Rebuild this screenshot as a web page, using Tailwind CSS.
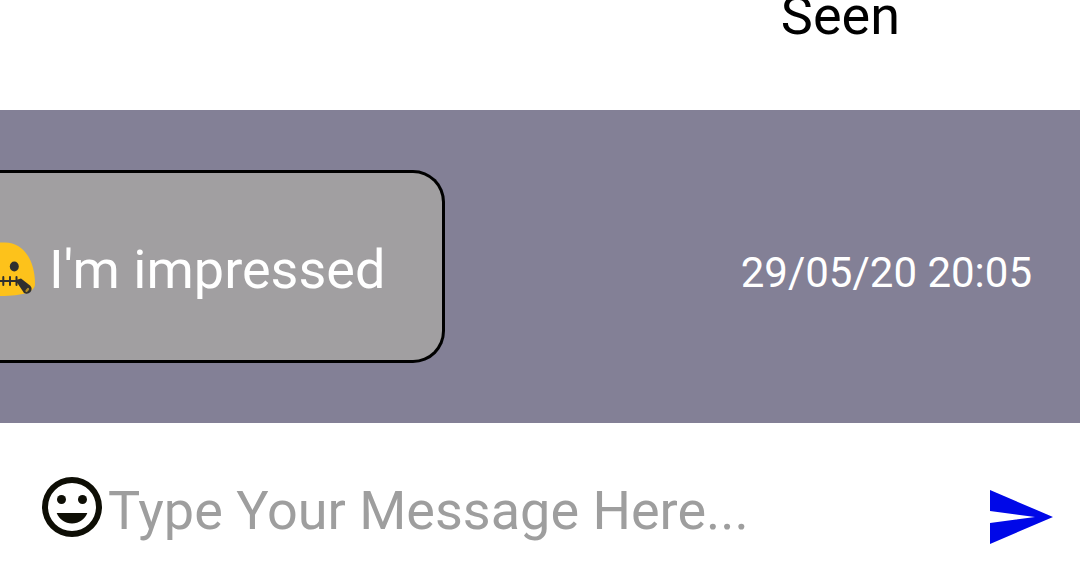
<!DOCTYPE html>
<html lang="en">
<head>
<meta charset="utf-8">
<meta name="viewport" content="width=device-width, initial-scale=1">
<title>Chat</title>
<script src="https://cdn.jsdelivr.net/npm/@tailwindcss/browser@4"></script>
</head>
<body class="flex min-h-screen flex-col overflow-hidden bg-white font-['Roboto',sans-serif] text-[54px] leading-16">
  <header class="-mt-4 flex justify-end pr-[180px] pb-[62px] text-black">
    <p>Seen</p>
  </header>

  <main class="flex items-center justify-between bg-[#838096] py-[60px] pr-12 text-white">
    <div class="flex items-center rounded-r-[32px] border-3 border-l-0 border-black bg-[#a19fa1] pt-[65px] pr-[57px] pb-[58px]">
      <svg class="mr-[13px] h-[56px] w-9 shrink-0" viewBox="0 0 36 56" role="img" aria-label="Zipper-mouth face">
        <path d="M0 0.500H5C25 1 35 20 35 42C35 50 23 54 0 54Z" fill="#fdc21b"/>
        <ellipse cx="14.300" cy="24.500" rx="4.500" ry="5" fill="#2f2f2f"/>
        <path d="M0 39H19M3.300 35V43M10 35V43M16.500 35V43" fill="none" stroke="#2f2f2f" stroke-width="2" stroke-linecap="round"/>
        <path d="M16 38L21 36.500L30 43.500Q33 46.500 30.500 50Q27.500 53 24 51L17 40.500Z" fill="#2f2f2f"/>
        <ellipse cx="27.300" cy="48" rx="3" ry="1.800" transform="rotate(-48 27.300 48)" fill="#b08b29" stroke="#2f2f2f"/>
      </svg>
      <p>I'm impressed</p>
    </div>
    <time datetime="2020-05-29T20:05" class="pt-3 text-[42px]">29/05/20 20:05</time>
  </main>

  <form class="flex items-center pt-[55px] pr-[27px] pb-6 pl-[42px]" onsubmit="return false">
    <button type="button" aria-label="Insert emoji" class="-mt-2 size-[60px] shrink-0">
      <svg class="size-full" viewBox="2 2 20 20" fill="#0e0e05">
        <path d="M12 2a10 10 0 1 0 0 20a10 10 0 1 0 0-20zm0 18a8 8 0 1 1 0-16a8 8 0 0 1 0 16z"/>
        <circle cx="8.500" cy="9.500" r="1.500"/>
        <circle cx="15.500" cy="9.500" r="1.500"/>
        <path d="M12 17.500c2.330 0 4.310-1.460 5.110-3.500H6.890c.8 2.040 2.780 3.500 5.110 3.500z"/>
      </svg>
    </button>
    <input type="text" aria-label="Message" placeholder="Type Your Message Here..." class="ml-1.5 h-16 min-w-0 grow text-black outline-none placeholder:text-[#9e9e9e]">
    <button type="submit" aria-label="Send" class="mt-3 h-[54px] w-[63px] shrink-0">
      <svg class="size-full" viewBox="0 0 63 54" fill="#0008e8">
        <path d="M0 0L63 27L0 54V33L45 27L0 21Z"/>
      </svg>
    </button>
  </form>
</body>
</html>
